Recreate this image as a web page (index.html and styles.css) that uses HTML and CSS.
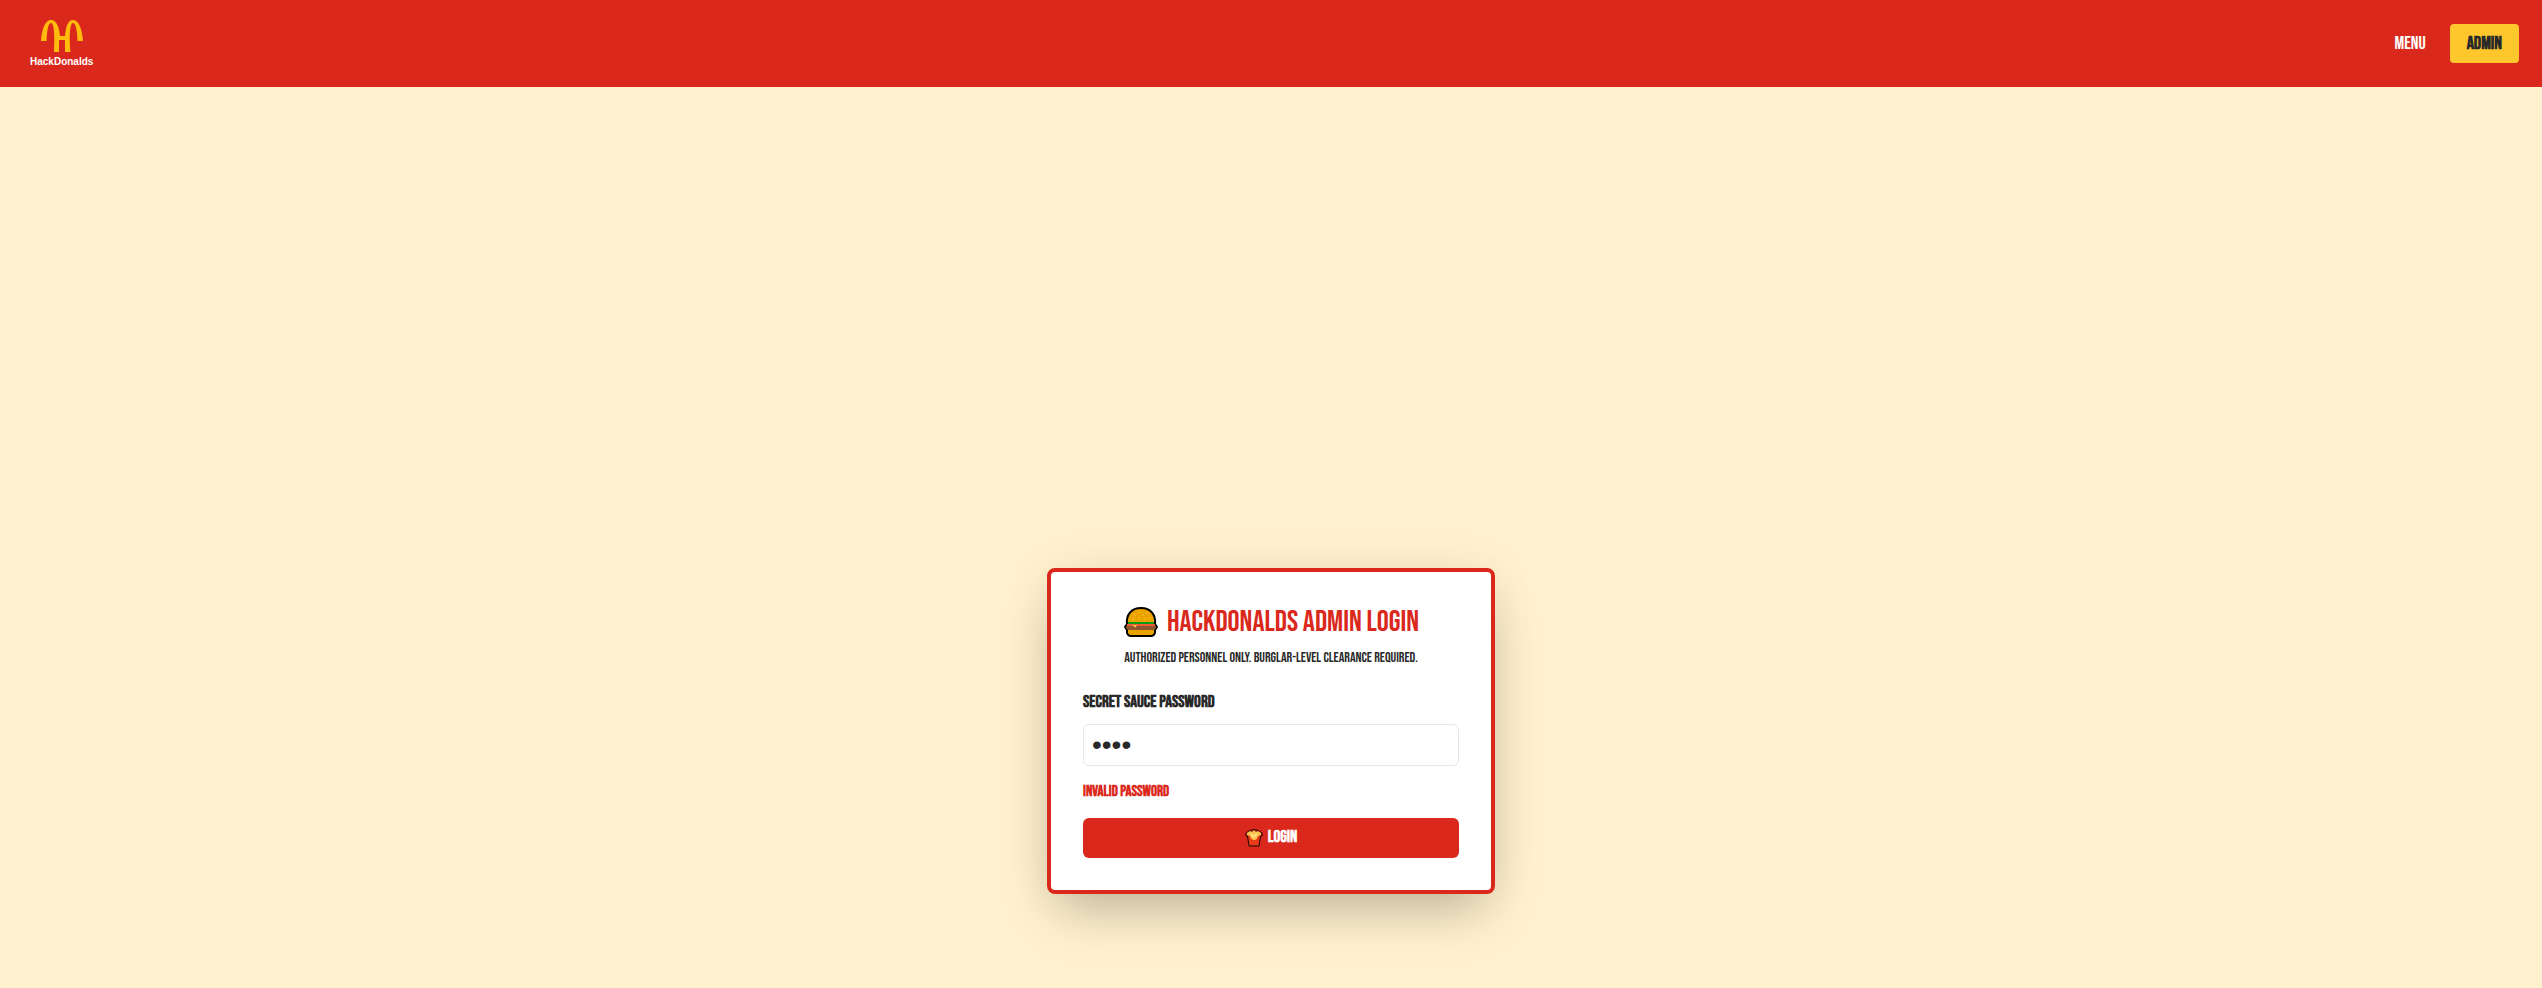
FILE: index.html
```html
<!DOCTYPE html>
<html lang="en">
<head>
<meta charset="utf-8">
<title>HackDonalds Admin</title>
<link rel="stylesheet" href="styles.css">
</head>
<body>
<header class="site-header">
  <a class="brand" href="#">
    <svg class="brand-mark" viewBox="0 0 44 34" aria-hidden="true">
      <path fill="#ffbc0d" d="M1 22C2 8 6 1 11 1C16 1 19 7 20 17H25C26 7 28 1 33 1C38 1 42 8 43 22H37.500C37 10 35.500 4 33 4C30 4 29 16 30.500 33H25V21H19V33H14C15 16 14 4 11 4C8.500 4 7 10 6.500 22Z"/>
    </svg>
    <span class="brand-name">HackDonalds</span>
  </a>
  <nav class="nav">
    <a class="nav-link" href="#">MENU</a>
    <a class="nav-button" href="#">ADMIN</a>
  </nav>
</header>
<main class="page">
  <form class="card">
    <h1 class="title">
      <svg class="burger" viewBox="0 0 36 30" aria-hidden="true">
        <path d="M4 17C3 8 8 1 18 1S33 8 32 17L34 20L32 23V26Q31 29 28 29H8Q5 29 4 26V23L2 20Z" fill="#eba300" stroke="#000" stroke-width="2" stroke-linejoin="round"/>
        <path d="M5 15H31V17H5Z" fill="#0b9b16"/>
        <path d="M4 17H32V19H4Z" fill="#ee5a32"/>
        <path d="M4 19H32Q34 21 31 23H5Q2 21 4 19Z" fill="#8e562e"/>
        <path d="M8 18H14L12 21L11 19Z" fill="#ffc83d"/>
        <g fill="#ffc83d"><circle cx="12" cy="8" r=".8"/><circle cx="16" cy="5" r=".8"/><circle cx="20" cy="8" r=".8"/><circle cx="24" cy="6" r=".8"/><circle cx="16" cy="11" r=".8"/><circle cx="10" cy="12" r=".8"/><circle cx="22" cy="12" r=".8"/><circle cx="27" cy="11" r=".8"/></g>
      </svg>
      <span>HACKDONALDS ADMIN LOGIN</span>
    </h1>
    <p class="subtitle">AUTHORIZED PERSONNEL ONLY. BURGLAR-LEVEL CLEARANCE REQUIRED.</p>
    <label class="label" for="password">SECRET SAUCE PASSWORD</label>
    <input class="field" id="password" type="password" value="beef">
    <p class="error" role="alert">INVALID PASSWORD</p>
    <button class="submit" type="button">
      <svg class="fries" viewBox="0 0 18 19" aria-hidden="true">
        <path d="M1 5Q9-2 17 5V8H15.500L14 18H4L2.500 8H1Z" fill="#e83b18" stroke="#160500" stroke-linejoin="round"/>
        <path d="M3 4Q9-1 15 4Z" fill="#8b1710"/>
        <path d="M2 5L5 3L7 4L9 2L11 4L13 3L16 5V7L13 8Q12 12 9 12T5 8L2 7Z" fill="#ffc04d"/>
        <path d="M6 5L9 7L12 5V8L9 10L6 8Z" fill="#ffdc7c"/>
      </svg>
      <span>LOGIN</span>
    </button>
  </form>
</main>
</body>
</html>
```
FILE: styles.css
```css
* { box-sizing: border-box; margin: 0; }
body {
  display: flex;
  flex-direction: column;
  height: 100vh;
  overflow: hidden;
  background: #fff1ce;
  color: #292929;
  font-family: "Bebas Neue", "Liberation Sans Narrow", "Liberation Sans", sans-serif;
}
.site-header {
  display: flex;
  align-items: center;
  justify-content: space-between;
  height: 87px;
  padding: 0 23px 0 30px;
  background: #da291c;
}
.brand {
  display: flex;
  flex-direction: column;
  align-items: center;
  color: #fff;
  text-decoration: none;
}
.brand-mark { width: 44px; height: 34px; }
.brand-name {
  padding-top: 3px;
  font: 700 10px/12px "Liberation Sans", sans-serif;
}
.nav { display: flex; align-items: center; gap: 24px; }
.nav-link, .nav-button {
  font-size: 18px;
  line-height: 23px;
  text-decoration: none;
}
.nav-link { color: #fff; }
.nav-button {
  padding: 8px 17px;
  border-radius: 4px;
  background: #ffc72c;
  color: #292929;
  font-weight: 700;
}
.page {
  display: flex;
  flex: 1;
  align-items: flex-end;
  justify-content: center;
  padding-bottom: 94px;
}
.card {
  display: flex;
  flex-direction: column;
  width: 100%;
  max-width: 448px;
  padding: 32px;
  border: 4px solid #da291c;
  border-radius: 8px;
  background: #fff;
  box-shadow: 0 25px 50px -12px rgba(0, 0, 0, .25), 0 0 50px rgba(0, 0, 0, .05);
}
.title {
  display: flex;
  align-items: center;
  justify-content: center;
  gap: 8px;
  color: #da291c;
  font-size: 30px;
  font-weight: 400;
  line-height: 36px;
  white-space: nowrap;
}
.burger { width: 36px; height: 30px; }
.subtitle {
  margin-top: 8px;
  font-size: 14px;
  line-height: 20px;
  text-align: center;
}
.label {
  margin-top: 24px;
  font-size: 17px;
  font-weight: 700;
  line-height: 20px;
}
.field {
  width: 100%;
  height: 42px;
  margin-top: 12px;
  padding: 0 8px;
  border: 1px solid #e5e7eb;
  border-radius: 6px;
  background: #fff;
  color: #292929;
  font-family: "Liberation Sans", sans-serif;
  font-size: 28px;
}
.error {
  margin-top: 16px;
  color: #da291c;
  font-size: 15px;
  font-weight: 700;
  line-height: 20px;
}
.submit {
  display: flex;
  align-items: center;
  justify-content: center;
  gap: 5px;
  height: 40px;
  margin-top: 16px;
  padding: 0 0 2px;
  border: 0;
  border-radius: 6px;
  background: #da291c;
  color: #fff;
  font-family: inherit;
  font-size: 17px;
  font-weight: 700;
}
.fries { width: 18px; height: 19px; }
```
